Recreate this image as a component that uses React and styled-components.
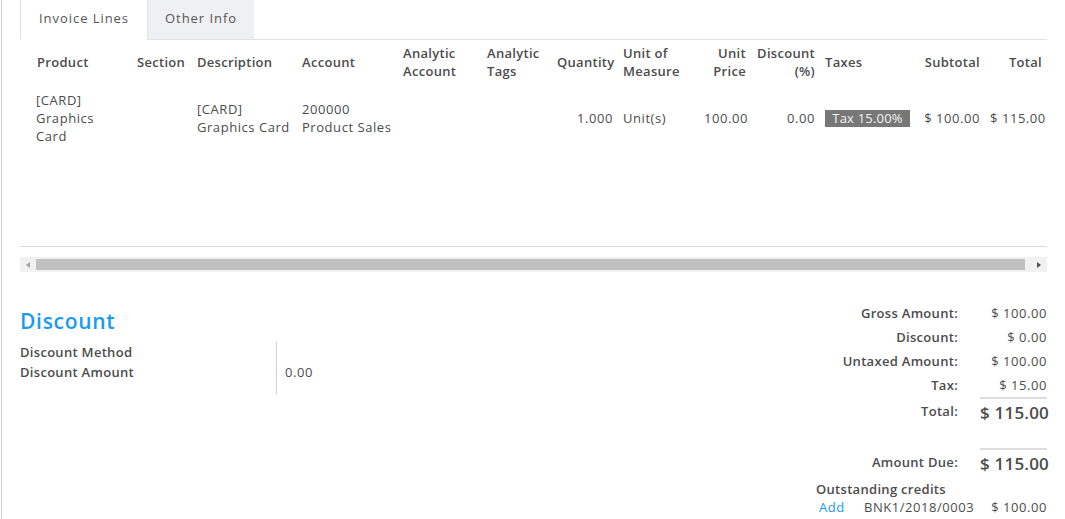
import React from "react";
import styled, { createGlobalStyle } from "styled-components";

const Global = createGlobalStyle`
  html, body { margin: 0; padding: 0; background: #fff; }
  body { font-family: "Open Sans", "Noto Sans", sans-serif; font-size: 13px; color: #4c4c4c; letter-spacing: 0.55px; }
  * { box-sizing: border-box; }
`;

const Sheet = styled.div`
  margin-left: 1px;
  border-left: 1px solid #d4d4d4;
  padding: 0 18px;
  min-height: 519px;
  width: 1064px;
`;

const Tabs = styled.div`
  display: flex;
  height: 40px;
  border-bottom: 1px solid #dee2e6;
`;

const Tab = styled.div`
  display: flex;
  align-items: center;
  padding: 0 ${(p) => (p.$active ? "18px" : "16px")} 3px;
  background: ${(p) => (p.$active ? "#fff" : "#eff0f4")};
  border: 1px solid ${(p) => (p.$active ? "#dee2e6" : "transparent")};
  border-top: none;
  border-bottom: ${(p) => (p.$active ? "1px solid #fff" : "none")};
  color: #555;
  font-size: 13px;
  letter-spacing: 0.95px;
  height: ${(p) => (p.$active ? "40px" : "39px")};
`;

const TableWrap = styled.div`
  height: 207px;
  border-bottom: 1px solid #dadada;
`;

const Table = styled.table`
  width: 100%;
  table-layout: fixed;
  border-collapse: collapse;
`;

const Th = styled.th`
  font-weight: 600;
  color: #4c4c4c;
  line-height: 18px;
  padding: 4px 5px 4px ${(p) => (p.$first ? "17px" : "5px")};
  text-align: ${(p) => (p.$right ? "right" : "left")};
  vertical-align: middle;
  font-size: 13px;
  letter-spacing: 0.3px;
`;

const Td = styled.td`
  line-height: 18px;
  padding: 7px ${(p) => (p.$first ? "10px" : "5px")} 7px ${(p) => (p.$first ? "16px" : "5px")};
  text-align: ${(p) => (p.$right ? "right" : "left")};
  vertical-align: middle;
  color: #4c4c4c;
  white-space: ${(p) => (p.$nowrap ? "nowrap" : "normal")};
`;

const Badge = styled.span`
  display: inline-block;
  background: #777;
  color: #f4f4f4;
  line-height: 17px;
  width: 85px;
  text-align: center;
  letter-spacing: 0.2px;
  white-space: nowrap;
`;

const ScrollTrack = styled.div`
  margin-top: 10px;
  height: 15px;
  background: #f1f1f1;
  display: flex;
  align-items: center;
  padding: 0 5px;
`;

const Arrow = styled.span`
  width: 0;
  height: 0;
  border-top: 3.5px solid transparent;
  border-bottom: 3.5px solid transparent;
  ${(p) => (p.$dir === "left" ? "border-right: 4px solid #a3a3a3;" : "border-left: 4px solid #505050;")}
  margin: ${(p) => (p.$dir === "left" ? "0 6px 0 1px" : "0 1px 0 12px")};
`;

const Thumb = styled.div`
  flex: 1;
  height: 11px;
  background: #c1c1c1;
`;

const Bottom = styled.div`
  display: flex;
  justify-content: space-between;
  align-items: flex-start;
  margin-top: 29px;
`;

const Left = styled.div`
  display: flex;
  flex-direction: column;
  padding-top: 7px;
`;

const Heading = styled.div`
  color: #1a9bf2;
  font-size: 21px;
  font-weight: 600;
  line-height: 26px;
  letter-spacing: 0.7px;
`;

const FieldGroup = styled.div`
  display: flex;
  margin-top: 8px;
`;

const Labels = styled.div`
  width: 256px;
  display: flex;
  flex-direction: column;
`;

const Label = styled.div`
  font-weight: 600;
  line-height: 20px;
  color: #4c4c4c;
  letter-spacing: 0.3px;
`;

const Values = styled.div`
  border-left: 1px solid #d4d4d4;
  padding-left: 8px;
  height: 52px;
  display: flex;
  flex-direction: column;
`;

const Value = styled.div`
  line-height: 20px;
  min-height: 20px;
`;

const Right = styled.div`
  display: flex;
  flex-direction: column;
  align-items: flex-end;
`;

const Totals = styled.div`
  display: grid;
  grid-template-columns: auto 67px;
  column-gap: 22px;
  align-items: center;
`;

const TLabel = styled.div`
  text-align: right;
  font-weight: 600;
  line-height: 24px;
  color: #4c4c4c;
  letter-spacing: 0.3px;
  padding-top: ${(p) => (p.$big ? "2px" : "0")};
  align-self: ${(p) => (p.$big ? "start" : "center")};
`;

const TValue = styled.div`
  text-align: right;
  line-height: ${(p) => (p.$big ? "26px" : "24px")};
  font-size: ${(p) => (p.$big ? "17px" : "13px")};
  font-weight: ${(p) => (p.$big ? 600 : 400)};
  letter-spacing: ${(p) => (p.$big ? "0.2px" : "0.55px")};
  color: #4c4c4c;
  white-space: nowrap;
  border-top: ${(p) => (p.$big ? "2px solid #ddd" : "none")};
  padding-top: ${(p) => (p.$big ? "1px" : "0")};
`;

const Spacer = styled.div`
  grid-column: 1 / span 2;
  height: ${(p) => p.$h}px;
`;

const Credits = styled.div`
  width: 231px;
  display: flex;
  flex-direction: column;
  margin-top: 3px;
`;

const CreditsTitle = styled.div`
  font-weight: 600;
  line-height: 18px;
  letter-spacing: 0.3px;
`;

const CreditRow = styled.div`
  display: flex;
  align-items: center;
  line-height: 18px;
`;

const AddLink = styled.span`
  color: #1a9bf2;
  width: 48px;
  padding-left: 3px;
`;

const CreditRef = styled.span`
  flex: 1;
`;

const cols = [112, 60, 105, 101, 84, 70, 66, 81, 52, 69, 94, 71, 62];

export default function App() {
  return (
    <>
      <Global />
      <Sheet>
        <Tabs>
          <Tab $active>Invoice Lines</Tab>
          <Tab>Other Info</Tab>
        </Tabs>
        <TableWrap>
          <Table>
            <colgroup>
              {cols.map((w, i) => (
                <col key={i} style={{ width: w }} />
              ))}
            </colgroup>
            <thead>
              <tr>
                <Th $first>Product</Th>
                <Th>Section</Th>
                <Th>Description</Th>
                <Th>Account</Th>
                <Th>Analytic Account</Th>
                <Th>Analytic Tags</Th>
                <Th $right>Quantity</Th>
                <Th>Unit of Measure</Th>
                <Th $right>Unit Price</Th>
                <Th $right>Discount (%)</Th>
                <Th>Taxes</Th>
                <Th $right>Subtotal</Th>
                <Th $right>Total</Th>
              </tr>
            </thead>
            <tbody>
              <tr>
                <Td $first>[CARD] Graphics Card</Td>
                <Td></Td>
                <Td>[CARD] Graphics Card</Td>
                <Td>200000 Product Sales</Td>
                <Td></Td>
                <Td></Td>
                <Td $right>1.000</Td>
                <Td>Unit(s)</Td>
                <Td $right>100.00</Td>
                <Td $right>0.00</Td>
                <Td>
                  <Badge>Tax 15.00%</Badge>
                </Td>
                <Td $right $nowrap>$ 100.00</Td>
                <Td $right $nowrap>$ 115.00</Td>
              </tr>
            </tbody>
          </Table>
        </TableWrap>
        <ScrollTrack>
          <Arrow $dir="left" />
          <Thumb />
          <Arrow $dir="right" />
        </ScrollTrack>
        <Bottom>
          <Left>
            <Heading>Discount</Heading>
            <FieldGroup>
              <Labels>
                <Label>Discount Method</Label>
                <Label>Discount Amount</Label>
              </Labels>
              <Values>
                <Value></Value>
                <Value>0.00</Value>
              </Values>
            </FieldGroup>
          </Left>
          <Right>
            <Totals>
              <TLabel>Gross Amount:</TLabel>
              <TValue>$ 100.00</TValue>
              <TLabel>Discount:</TLabel>
              <TValue>$ 0.00</TValue>
              <TLabel>Untaxed Amount:</TLabel>
              <TValue>$ 100.00</TValue>
              <TLabel>Tax:</TLabel>
              <TValue>$ 15.00</TValue>
              <TLabel $big>Total:</TLabel>
              <TValue $big>$ 115.00</TValue>
              <Spacer $h={22} />
              <TLabel $big>Amount Due:</TLabel>
              <TValue $big>$ 115.00</TValue>
            </Totals>
            <Credits>
              <CreditsTitle>Outstanding credits</CreditsTitle>
              <CreditRow>
                <AddLink>Add</AddLink>
                <CreditRef>BNK1/2018/0003</CreditRef>
                <span>$ 100.00</span>
              </CreditRow>
            </Credits>
          </Right>
        </Bottom>
      </Sheet>
    </>
  );
}
